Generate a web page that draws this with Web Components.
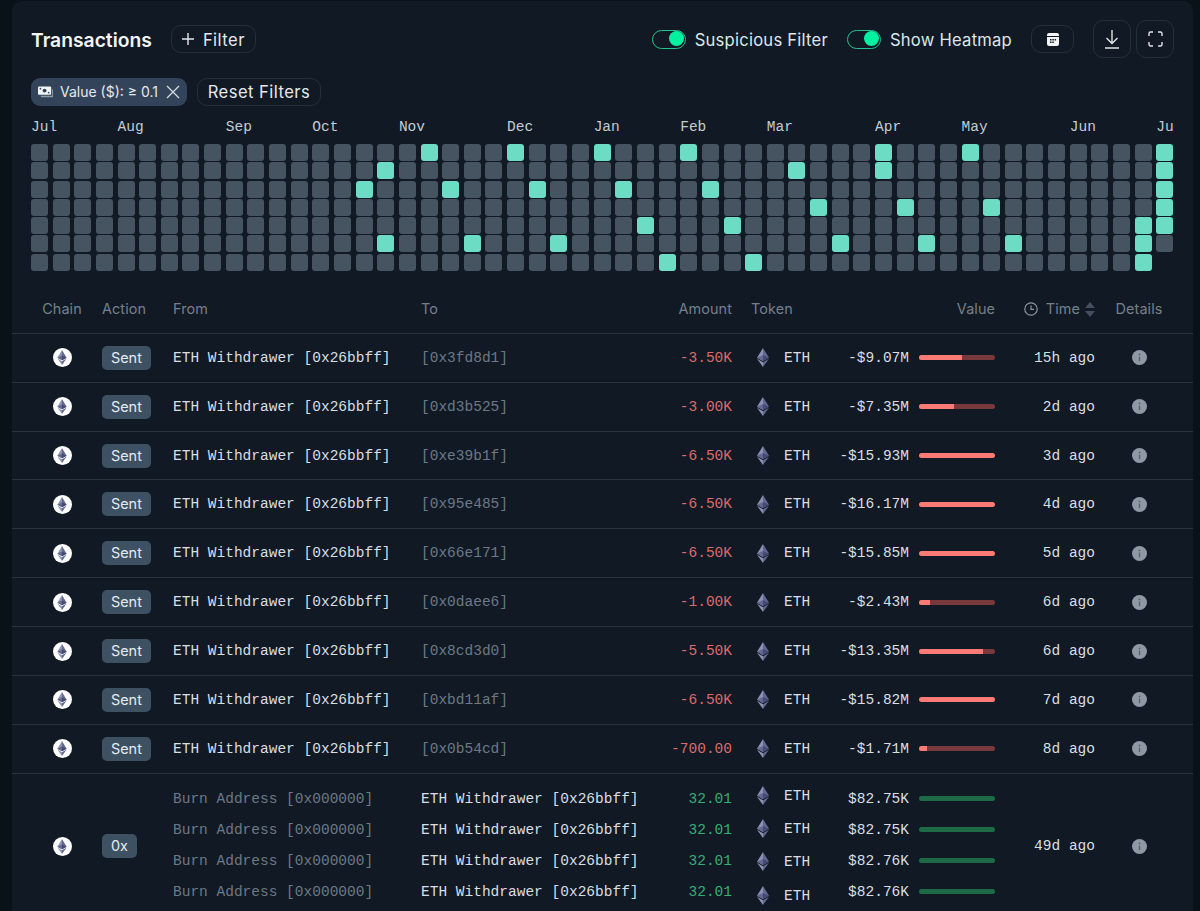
<!DOCTYPE html>
<html><head><meta charset="utf-8">
<style>
html,body{margin:0;height:911px;overflow:hidden;background:#0a1219;}
body{padding:1px 7px 0 12px;box-sizing:border-box;font-family:Inter,"Liberation Sans",sans-serif;color:#e6eaee;}
</style></head><body>
<tx-panel>
  <panel-head></panel-head>
  <heat-map></heat-map>
  <tx-table></tx-table>
</tx-panel>
<script>
const ETH=`<polygon fill="#8A92B2" points="128,0 0,212 128,288"/><polygon fill="#62688F" points="128,0 256,212 128,288"/><polygon fill="#62688F" points="128,154 0,212 128,288"/><polygon fill="#454A75" points="128,154 256,212 128,288"/><polygon fill="#8A92B2" points="128,312 0,236 128,417"/><polygon fill="#62688F" points="128,312 256,236 128,417"/>`;
function def(name,css,html,init){
  customElements.define(name,class extends HTMLElement{
    constructor(){super();this.attachShadow({mode:'open'});}
    connectedCallback(){
      const a=n=>this.getAttribute(n)||'';
      this.shadowRoot.innerHTML=`<style>${css}</style>`+(typeof html==='function'?html(a,this):html);
      if(init)init(this.shadowRoot,a,this);
    }
  });
}
def('tx-panel',`:host{display:block;height:930px;background:#111a24;border-radius:10px;overflow:hidden;}`,`<slot></slot>`);
def('eth-coin',`:host{display:inline-flex;width:19px;height:19px;border-radius:50%;background:#fff;align-items:center;justify-content:center;}svg{width:10px;height:15px;display:block}`,`<svg viewBox="0 0 256 417">${ETH}</svg>`);
def('eth-gem',`:host{display:inline-flex;width:13px;justify-content:center}svg{width:12px;height:19px;display:block}`,`<svg viewBox="0 0 256 417" preserveAspectRatio="none">${ETH}</svg>`);
def('tx-toggle',`:host{display:inline-flex;align-items:center;gap:9px;font:400 16.6px/20px Inter,sans-serif;color:#dfe5ea;letter-spacing:.23px;white-space:nowrap}
.t{width:34px;height:19px;box-sizing:border-box;border:1.5px solid #1fc48e;border-radius:10px;position:relative;flex:none}
.k{position:absolute;right:.5px;top:.5px;width:15px;height:15px;border-radius:50%;background:#00f2a0}
.l{padding-top:1px}`,`<span class="t"><span class="k"></span></span><span class="l"><slot></slot></span>`);
def('ghost-btn',`:host{display:inline-flex;align-items:center;justify-content:center;box-sizing:border-box;border:1.5px solid #252f3a;border-radius:10px;color:#e4e8ec;font:400 16.6px/20px Inter,sans-serif;letter-spacing:.45px;white-space:nowrap;gap:9px;flex:none}`,`<slot></slot>`);
def('filter-chip',`:host{display:inline-flex;align-items:center;box-sizing:border-box;width:156px;height:28px;padding:0 7px;border-radius:9px;background:#33445a;color:#e4e8ec;font:400 14px/20px Inter,sans-serif;white-space:nowrap;flex:none}
.m{width:15px;height:14px;margin-right:7px;flex:none}.x{width:14px;height:14px;margin-left:auto;flex:none}`,
`<svg class="m" viewBox="0 0 16 14"><path fill="#8f9aa8" d="M3 11h12V4h1v8.5H3z"/><rect x="0" y="1" width="14" height="9" rx="1.2" fill="#f2f4f6"/><circle cx="7" cy="5.5" r="2.1" fill="#33445a"/><circle cx="2.6" cy="3.4" r=".9" fill="#33445a"/><circle cx="11.4" cy="7.6" r=".9" fill="#33445a"/></svg><slot></slot><svg class="x" viewBox="0 0 14 14"><path d="M1 1l12 12M13 1L1 13" stroke="#d5dbe1" stroke-width="1.3" fill="none"/></svg>`);
def('panel-head',`:host{display:block;padding:19px 19px 0}
.r{display:flex;align-items:center;height:38px}
h2{margin:0 19px 0 0;padding-top:1px;font:600 19.3px/24px Inter,sans-serif;color:#f2f4f6;white-space:nowrap}
.sp{flex:1}
.r2{display:flex;gap:10px;margin-top:20px;height:28px}
svg{display:block}
.tx{padding-top:1px}`,
`<div class="r"><h2>Transactions</h2>
<ghost-btn style="width:85px;height:28px"><svg width="12" height="12" viewBox="0 0 12 12"><path d="M6 0v12M0 6h12" stroke="#e4e8ec" stroke-width="1.4"/></svg><span class="tx">Filter</span></ghost-btn>
<span class="sp"></span>
<tx-toggle>Suspicious Filter</tx-toggle>
<tx-toggle style="margin-left:19px">Show Heatmap</tx-toggle>
<ghost-btn style="width:43px;height:28px;margin-left:19px"><svg width="12" height="13" viewBox="0 0 12 13"><path fill="#f2f4f6" d="M2 0h8a2 2 0 0 1 2 2v1H0V2a2 2 0 0 1 2-2zM0 4h12v7a2 2 0 0 1-2 2H2a2 2 0 0 1-2-2z"/><path fill="#111a24" d="M3 6h1.5v1.5H3zM5.3 6h1.5v1.5H5.3zM7.6 6h1.5v1.5H7.6zM3 8.6h1.5v1.5H3zM5.3 8.6h1.5v1.5H5.3z"/></svg></ghost-btn>
<ghost-btn style="width:38px;height:38px;margin-left:19px"><svg width="14" height="19" viewBox="0 0 14 19"><path d="M7 0v13M1.5 8L7 13.5 12.5 8M0 18h14" stroke="#dfe4e9" stroke-width="1.4" fill="none"/></svg></ghost-btn>
<ghost-btn style="width:38px;height:38px;margin-left:5px"><svg width="15" height="16" viewBox="0 0 15 16"><path d="M1 5V2.5A1.5 1.5 0 0 1 2.5 1H5M10 1h2.5A1.5 1.5 0 0 1 14 2.5V5M14 11v2.5a1.5 1.5 0 0 1-1.5 1.5H10M5 15H2.5A1.5 1.5 0 0 1 1 13.5V11" stroke="#dfe4e9" stroke-width="1.4" fill="none"/></svg></ghost-btn>
</div>
<div class="r2"><filter-chip>Value ($): ≥ 0.1</filter-chip><ghost-btn style="width:124px;height:28px">Reset Filters</ghost-btn></div>`);
def('heat-map',`:host{display:block;padding:13px 19px 0;overflow:hidden}
.g{display:grid;grid-template-columns:repeat(53,17px);column-gap:4.65px;width:1143px}
.mo{height:16px;font:400 14.5px/16px "Liberation Mono",monospace;color:#c4ccd4;margin-bottom:9px;white-space:nowrap;overflow:hidden}
.mo span{display:block;width:17px;overflow:visible}
.c{grid-template-rows:repeat(7,17px);row-gap:1.3px;grid-auto-flow:column}
.c i{display:block;width:17px;height:17px;border-radius:3px;background:#465360}
.c i.on{background:#6cdcc4}.c i.none{background:none}`,
()=>{
  const mo={0:'Jul',4:'Aug',9:'Sep',13:'Oct',17:'Nov',22:'Dec',26:'Jan',30:'Feb',34:'Mar',39:'Apr',43:'May',48:'Jun',52:'Ju'};
  const on={0:[18,22,26,30,39,43,52],1:[16,35,39,52],2:[15,19,23,27,31,52],3:[36,40,44,52],4:[28,32,51,52],5:[16,20,24,37,41,45,51],6:[29,33,51]};
  let m='',c='';
  for(let i=0;i<53;i++){m+=`<span>${mo[i]||''}</span>`;
    for(let r=0;r<7;r++){const k=on[r].includes(i)?'on':(i===52&&r===6?'none':'');c+=`<i class="${k}"></i>`;}}
  return `<div class="g mo">${m}</div><div class="g c">${c}</div>`;
});
const COLS='90px 71px 248px 230px 81px 19px 69px 175px 100px 88px';
const MONO='400 14.5px/20px "Liberation Mono",monospace';
def('info-dot',`:host{display:inline-flex}svg{display:block}`,`<svg width="15" height="15" viewBox="0 0 15 15"><circle cx="7.5" cy="7.5" r="7.5" fill="#8e99a5"/><path d="M7.5 6.6v4.6" stroke="#55606c" stroke-width="1.4"/><circle cx="7.5" cy="4.4" r=".9" fill="#55606c"/></svg>`);
def('tag-pill',`:host{display:inline-flex;align-items:center;justify-content:center;height:24px;padding:0 9px;border-radius:5px;background:#3e5163;color:#e6eaee;font:400 14.4px/20px Inter,sans-serif}`,`<slot></slot>`);
def('value-bar',`:host{display:block;width:76px;height:5px;border-radius:3px;overflow:hidden;background:var(--track);flex:none}
div{height:100%;background:var(--fill)}`,(a)=>`<div style="width:${a('pct')}%"></div>`);
def('tx-head',`:host{display:grid;grid-template-columns:${COLS};height:48px;box-sizing:border-box;margin-top:15px;border-bottom:1px solid #28333e;align-items:center;font:400 14.4px/20px Inter,sans-serif;color:#73808c;letter-spacing:.1px}
.ch{padding-left:10px;text-align:center}.r{text-align:right}.ti{display:flex;align-items:center;justify-content:flex-end;gap:5px}.ti svg:first-child{margin-right:3px}.d{text-align:center}`,
`<span class="ch">Chain</span><span>Action</span><span>From</span><span>To</span><span class="r">Amount</span><span></span><span>Token</span><span class="r">Value</span>
<span class="ti"><svg width="14" height="14" viewBox="0 0 14 14"><circle cx="7" cy="7" r="6.2" fill="none" stroke="#8a95a0" stroke-width="1.2"/><path d="M7 3.4V7.4h3" fill="none" stroke="#8a95a0" stroke-width="1.2"/></svg>Time<svg width="10" height="15" viewBox="0 0 10 15"><path d="M5 0l5 6H0zM5 15L0 9h10z" fill="#44505c"/></svg></span><span class="d">Details</span>`);
def('tx-row',`:host{display:grid;grid-template-columns:${COLS};height:48.9px;box-sizing:border-box;border-bottom:1px solid #28333e;align-items:center;font:${MONO};color:#d9dee3;white-space:nowrap;--track:#77393b;--fill:#fb7a75}
.ch{padding-left:10px;display:flex;justify-content:center}.to{color:#6c7885}.am{text-align:right;color:#dd6a6c}
.tk{display:flex;align-items:center;gap:15px;padding-left:5px}
.v{display:flex;align-items:center;justify-content:flex-end;gap:10px}.t{text-align:right}.d{display:flex;justify-content:center}`,
a=>`<span class="ch"><eth-coin></eth-coin></span><span><tag-pill>Sent</tag-pill></span><span>ETH Withdrawer [0x26bbff]</span><span class="to">[${a('to')}]</span><span class="am">${a('amt')}</span><span></span><span class="tk"><eth-gem></eth-gem>ETH</span><span class="v">${a('val')}<value-bar pct="${a('pct')}"></value-bar></span><span class="t">${a('time')}</span><span class="d"><info-dot></info-dot></span>`);
def('tx-group',`:host{display:grid;grid-template-columns:${COLS};height:144px;box-sizing:border-box;align-items:center;font:${MONO};color:#d9dee3;white-space:nowrap;--track:#1e6a47;--fill:#1e6a47}
.ch{padding-left:10px;display:flex;justify-content:center}.t{text-align:right}.d{display:flex;justify-content:center}
.s{display:flex;flex-direction:column;align-self:start;padding-top:15px}
.s>div{height:31px;line-height:20px;display:flex;align-items:flex-start}
.fr{color:#6c7885}.am{color:#35ad77}.am>div{justify-content:flex-end}
.tk{padding-top:12px}.tk>div{height:33.3px;gap:15px;padding-left:5px;align-items:flex-start}
.v>div{justify-content:flex-end;gap:10px}.v value-bar{margin-top:7px}`,
()=>{
  const f=[0,1,2,3],vals=['$82.75K','$82.75K','$82.76K','$82.76K'];
  const col=(c,fn)=>`<span class="s ${c}">${f.map(fn).join('')}</span>`;
  return `<span class="ch"><eth-coin></eth-coin></span><span><tag-pill>0x</tag-pill></span>`+
  col('fr',()=>`<div>Burn Address [0x000000]</div>`)+
  col('to',()=>`<div>ETH Withdrawer [0x26bbff]</div>`)+
  col('am',()=>`<div>32.01</div>`)+`<span></span>`+
  col('tk',()=>`<div><eth-gem></eth-gem>ETH</div>`)+
  col('v',i=>`<div>${vals[i]}<value-bar pct="100"></value-bar></div>`)+
  `<span class="t">49d ago</span><span class="d"><info-dot></info-dot></span>`;
});
def('tx-table',`:host{display:block}`,()=>{
  const rows=[['0x3fd8d1','-3.50K','-$9.07M',56,'15h ago'],['0xd3b525','-3.00K','-$7.35M',46,'2d ago'],['0xe39b1f','-6.50K','-$15.93M',100,'3d ago'],['0x95e485','-6.50K','-$16.17M',100,'4d ago'],['0x66e171','-6.50K','-$15.85M',100,'5d ago'],['0x0daee6','-1.00K','-$2.43M',15,'6d ago'],['0x8cd3d0','-5.50K','-$13.35M',84,'6d ago'],['0xbd11af','-6.50K','-$15.82M',100,'7d ago'],['0x0b54cd','-700.00','-$1.71M',10,'8d ago']];
  return `<tx-head></tx-head>`+rows.map(r=>`<tx-row to="${r[0]}" amt="${r[1]}" val="${r[2]}" pct="${r[3]}" time="${r[4]}"></tx-row>`).join('')+`<tx-group></tx-group>`;
});
</script>
</body></html>
